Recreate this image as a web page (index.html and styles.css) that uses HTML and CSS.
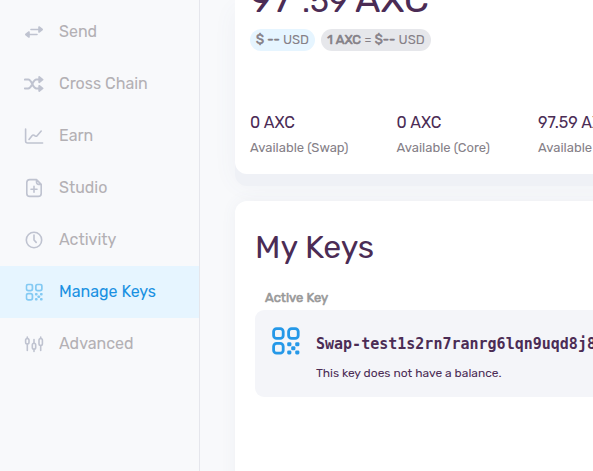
FILE: index.html
```html
<!DOCTYPE html>
<html lang="en">
<head>
<meta charset="utf-8">
<title>My Keys</title>
<link rel="stylesheet" href="styles.css">
</head>
<body>
<svg width="0" height="0" class="defs">
  <symbol id="qr" viewBox="0 0 28 28">
    <g fill="none" stroke="currentColor" stroke-width="2.8"><rect x="1.6" y="1.6" width="9.6" height="9.8" rx="3"/><rect x="16.6" y="1.6" width="9.6" height="9.8" rx="3"/><rect x="1.6" y="16.4" width="9.6" height="9.8" rx="3"/></g>
    <g fill="currentColor"><rect x="15.2" y="15.2" width="4.2" height="4" rx="1.3"/><rect x="23.2" y="15.2" width="4.2" height="4" rx="1.3"/><rect x="19.2" y="19.2" width="4.2" height="4" rx="1.3"/><rect x="15.2" y="23.4" width="4.2" height="4" rx="1.3"/><rect x="23.2" y="23.4" width="4.2" height="4" rx="1.3"/></g>
  </symbol>
</svg>
<div class="app">
  <nav class="sidebar">
    <a class="item"><svg viewBox="0 0 20 20"><path d="M7 7.5h8M5 12.5h8"/><path class="solid" d="M15 5l3.2 2.5L15 10zM5 10l-3.2 2.5L5 15z"/></svg><span>Send</span></a>
    <a class="item"><svg viewBox="0 0 20 20"><path d="M.8 5.6h3.4c3.8 0 4.4 8.8 8.2 8.8H15M.8 14.4h3.4c3.8 0 4.4-8.8 8.2-8.8H15" stroke-width="2"/><path class="solid" d="M15.2 3l3.4 2.6-3.4 2.6zM15.2 11.8l3.4 2.6-3.4 2.6z" stroke-width="1.8"/></svg><span>Cross Chain</span></a>
    <a class="item"><svg viewBox="0 0 20 20"><path d="M1.6 3v12q0 2 2 2h15M5 13.5l3.2-4q.8-.8 1.8-.2l1.4.8q1 .5 1.7-.4L17.2 5"/></svg><span>Earn</span></a>
    <a class="item"><svg viewBox="0 0 20 20"><path d="M12.5 1.6H5.8q-3 0-3 3v10.8q0 3 3 3h8.4q3 0 3-3v-9zM12.5 1.6v2.5q0 2.3 2.3 2.3h2.4M10 8.2v6M7 11.2h6"/></svg><span>Studio</span></a>
    <a class="item"><svg viewBox="0 0 20 20"><circle cx="10" cy="10" r="7.7"/><path d="M10 5v5l2.2 2.4"/></svg><span>Activity</span></a>
    <a class="item active"><svg viewBox="0 0 20 20"><use href="#qr" x="1.4" y="1.4" width="17.6" height="17.6"/></svg><span>Manage Keys</span></a>
    <a class="item"><svg viewBox="0 0 20 20"><path d="M3.3 3v1.5M3.3 10v6.5M10 5.5V9M10 15v2.5M16.7 3v1.5M16.7 11.5v5"/><rect x="1.6" y="4.5" width="3.4" height="5.5" rx="1.7"/><rect x="8.3" y="9.3" width="3.4" height="6" rx="1.7"/><rect x="15" y="4.5" width="3.4" height="7" rx="1.7"/></svg><span>Advanced</span></a>
  </nav>
  <main class="content">
    <section class="card balance">
      <div class="total"><span class="whole">97</span><span class="fraction">.59</span><span class="unit">AXC</span></div>
      <div class="tags"><span class="tag usd"><span><b>$ --</b> USD</span></span><span class="tag rate"><span><b>1 AXC</b> = <b>$--</b> USD</span></span></div>
      <div class="amounts">
        <div class="amount"><span class="value">0 AXC</span><span class="label">Available (Swap)</span></div>
        <div class="amount second"><span class="value">0 AXC</span><span class="label">Available (Core)</span></div>
        <div class="amount"><span class="value">97.59 AXC</span><span class="label">Available (Stake)</span></div>
      </div>
    </section>
    <section class="card keys">
      <h1>My Keys</h1>
      <h2>Active Key</h2>
      <div class="key">
        <svg class="key-icon"><use href="#qr"/></svg>
        <div><div class="address">Swap-test1s2rn7ranrg6lqn9uqd8j8</div><div class="note">This key does not have a balance.</div></div>
      </div>
    </section>
  </main>
</div>
</body>
</html>
```
FILE: styles.css
```css
* { box-sizing: border-box; }
body { margin: 0; height: 471px; overflow: hidden; background: #f8f9fb; color: #4b2c55; font-family: Rubik, Roboto, sans-serif; }
.defs { display: none; }
.app { display: flex; height: 471px; overflow: hidden; }
.sidebar { flex: 0 0 200px; border-right: 1px solid #e5e6ec; padding-top: 6px; }
.item { display: flex; align-items: center; height: 52px; padding-left: 24px; gap: 15px; color: #b3b0b4; font-size: 16px; white-space: nowrap; }
.item span { padding-bottom: 2px; }
.item svg { width: 20px; height: 20px; color: #bfc3d0; fill: none; stroke: currentColor; stroke-width: 1.6; stroke-linecap: round; stroke-linejoin: round; }
.item svg use { stroke: none; }
.item svg .solid { fill: currentColor; }
.item.active { background: #e6f5ff; color: #1a91e2; }
.item.active svg { color: #84caf3; }
.content { flex: 0 0 393px; min-width: 0; padding-left: 35px; }
.card { width: 665px; background: #fff; border-radius: 12px; white-space: nowrap; }
.balance { height: 174px; margin-bottom: 27px; border-radius: 0 0 12px 12px; padding-left: 15px; box-shadow: 0 12px 0 #eff1f6, 0 10px 24px rgba(90, 110, 150, .06); }
.total { display: flex; align-items: baseline; height: 29px; font-size: 38px; line-height: 44px; }
.total span { margin-top: -23px; }
.whole { width: 52px; }
.fraction { width: 53px; font-size: 32px; }
.tags { display: flex; gap: 6px; }
.tag { display: flex; align-items: center; justify-content: center; height: 22px; border-radius: 11px; font-size: 13px; color: #858087; }
.tag > span { padding-bottom: 1px; }
.tag b { font-weight: 400; -webkit-text-stroke: .6px currentColor; }
.usd { width: 65px; background: #e6f5ff; }
.rate { width: 110px; background: #e6e7eb; }
.amounts { display: flex; padding-top: 62px; }
.amount { width: 146.5px; display: flex; flex-direction: column; }
.second { width: 141.5px; }
.value { font-size: 16px; line-height: 20px; }
.label { font-size: 13px; line-height: 20px; margin-top: 5px; color: #858087; }
.keys { height: 320px; padding: 26px 20px 0; box-shadow: 0 0 16px rgba(80, 100, 140, .06); }
h1 { margin: 0; font-size: 32px; font-weight: 400; line-height: 40px; }
h2 { margin: 21px 0 2px 10px; color: #999; font-size: 13px; font-weight: 400; -webkit-text-stroke: .6px currentColor; line-height: 20px; }
.key { display: flex; height: 87px; border-radius: 9px; background: #f4f5f9; padding: 17px; gap: 16px; }
.key-icon { width: 28px; height: 28px; color: #2598e8; }
.address { margin-top: 7px; font: bold 15px/20px "DejaVu Sans Mono", monospace; }
.note { margin-top: 11px; font-size: 12px; line-height: 16px; }
```
